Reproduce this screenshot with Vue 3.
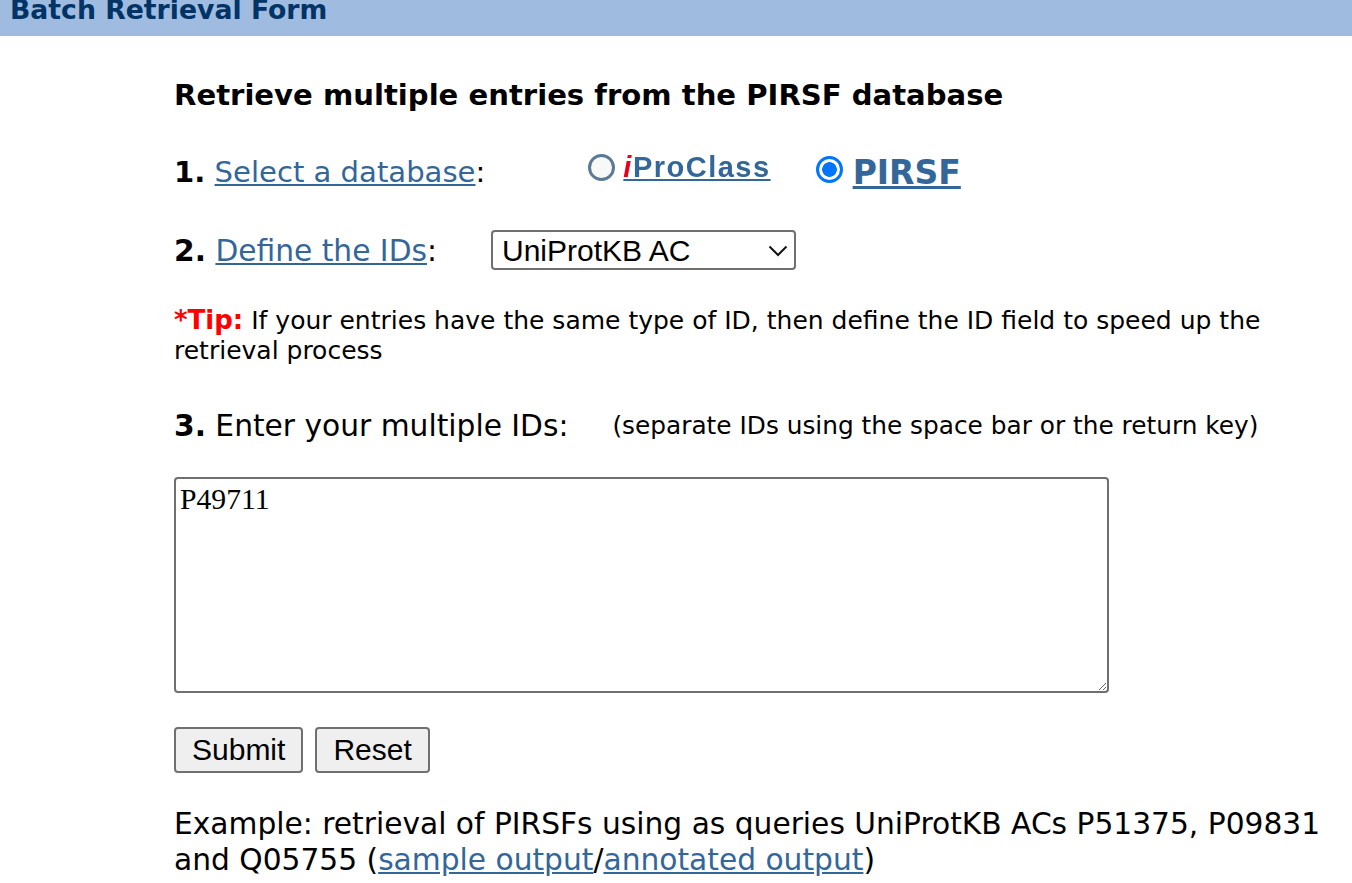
<script setup>
const idTypes = ['UniProtKB AC', 'UniProtKB ID', 'PIRSF ID', 'RefSeq', 'GenBank']
</script>

<template>
  <div class="page">
    <div class="title-bar">Batch Retrieval Form</div>
    <form class="form" @submit.prevent>
      <h2 class="heading">Retrieve multiple entries from the PIRSF database</h2>

      <div class="step step-db">
        <span class="step-label"><b>1.</b> <a href="#">Select a database</a>:</span>
        <label class="db-option db-iproclass">
          <input type="radio" name="db" class="radio" />
          <span class="logo"><i>i</i>ProClass</span>
        </label>
        <label class="db-option db-pirsf">
          <input type="radio" name="db" class="radio" checked />
          <a href="#" class="pirsf-link">PIRSF</a>
        </label>
      </div>

      <div class="step step-ids">
        <span class="step-label"><b>2.</b> <a href="#">Define the IDs</a>:</span>
        <div class="select-wrap">
          <select class="id-select">
            <option v-for="t in idTypes" :key="t">{{ t }}</option>
          </select>
          <svg class="chevron" width="20" height="12" viewBox="0 0 20 12" fill="none">
            <path d="M1.5 1.5 L10 10 L18.5 1.5" stroke="#111" stroke-width="2" />
          </svg>
        </div>
      </div>

      <p class="tip"><b>*Tip:</b> If your entries have the same type of ID, then define the ID field to speed up the retrieval process</p>

      <div class="step step-enter">
        <span class="step-label"><b>3.</b> Enter your multiple IDs:</span>
        <span class="hint">(separate IDs using the space bar or the return key)</span>
      </div>

      <textarea class="ids" spellcheck="false">P49711</textarea>

      <div class="buttons">
        <button type="submit">Submit</button>
        <button type="reset">Reset</button>
      </div>

      <p class="example">Example: retrieval of PIRSFs using as queries UniProtKB ACs P51375, P09831 and Q05755 (<a href="#">sample output</a>/<a href="#">annotated output</a>)</p>
    </form>
  </div>
</template>

<style scoped>
.page {
  font-family: "DejaVu Sans", sans-serif;
  color: #000;
  height: 883px;
  overflow: hidden;
  background: #fff;
}

.title-bar {
  height: 36px;
  background: #9fbbe0;
  color: #003366;
  font-size: 26.7px;
  font-weight: 700;
  line-height: 20px;
  padding-left: 10px;
  overflow: hidden;
}

.form {
  padding: 41px 0 0 174px;
}

.heading {
  margin: 0;
  font-size: 29.1px;
  line-height: 36px;
}

a {
  color: #336699;
}

.step {
  display: flex;
  align-items: center;
  font-size: 29.7px;
}

.step-db {
  margin-top: 37px;
  height: 44px;
  font-size: 29.1px;
}

.db-option {
  display: flex;
  align-items: center;
}

.radio {
  appearance: none;
  box-sizing: border-box;
  width: 27px;
  height: 27px;
  margin: 0;
  border-radius: 50%;
}

.db-iproclass {
  margin-left: 103px;
  margin-bottom: 9px;
  filter: blur(0.5px);
}

.db-iproclass .radio {
  border: 3px solid #5d7a94;
  background: #f6f9f7;
}

.logo {
  margin-left: 8px;
  color: #336699;
  font-family: "Liberation Sans", sans-serif;
  font-weight: 700;
  font-size: 29px;
  letter-spacing: 1.5px;
  text-decoration: underline;
}

.logo i {
  color: #e8001c;
}

.db-pirsf {
  margin-left: 45px;
}

.db-pirsf .radio {
  margin-bottom: 6px;
  border: 3px solid #0075ff;
  background: radial-gradient(circle, #0075ff 0 7px, #fff 7.6px);
}

.pirsf-link {
  margin-left: 10px;
  font-weight: 700;
  font-size: 33px;
}

.step-ids {
  margin-top: 36px;
}

.select-wrap {
  position: relative;
  margin-left: 54px;
}

.id-select {
  display: block;
  appearance: none;
  box-sizing: border-box;
  width: 305px;
  height: 40px;
  padding: 0 0 0 9px;
  font-family: "Liberation Sans", sans-serif;
  font-size: 30px;
  color: #000;
  border: 2px solid #707070;
  border-radius: 4px;
  background: #fff;
}

.chevron {
  position: absolute;
  top: 15px;
  right: 8px;
  pointer-events: none;
}

.tip {
  margin: 35px 0 0;
  font-size: 25px;
  line-height: 30px;
  width: 1100px;
}

.tip b {
  color: #f00;
  font-size: 26px;
}

.step-enter {
  margin-top: 42px;
}

.hint {
  font-size: 24.8px;
  margin-left: 44px;
}

.ids {
  display: block;
  box-sizing: border-box;
  width: 935px;
  height: 216px;
  margin-top: 34px;
  padding: 4px 4px;
  font-family: "Liberation Serif", serif;
  font-size: 29.7px;
  border: 2px solid #707070;
  border-radius: 4px;
  outline: none;
}

.buttons {
  display: flex;
  gap: 12px;
  margin-top: 34px;
}

button {
  box-sizing: border-box;
  height: 46px;
  padding: 0 16px;
  font-family: "Liberation Sans", sans-serif;
  font-size: 30px;
  color: #000;
  background: #efefef;
  border: 2px solid #707070;
  border-radius: 4px;
}

.example {
  margin: 33px 0 0;
  font-size: 29.7px;
  line-height: 36px;
  width: 1160px;
}
</style>
